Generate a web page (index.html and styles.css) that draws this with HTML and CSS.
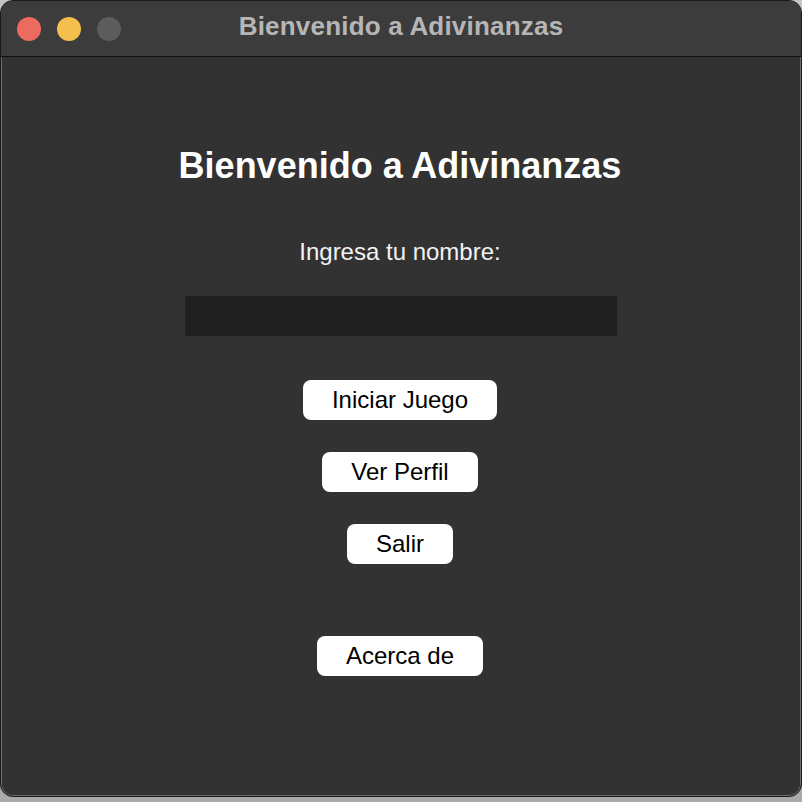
FILE: index.html
```html
<!DOCTYPE html>
<html lang="es">
<head>
<meta charset="utf-8">
<title>Bienvenido a Adivinanzas</title>
<link rel="stylesheet" href="styles.css">
</head>
<body>
<div class="window">
  <div class="titlebar">
    <div class="lights">
      <span class="light red"></span>
      <span class="light yellow"></span>
      <span class="light gray"></span>
    </div>
    <div class="wintitle">Bienvenido a Adivinanzas</div>
    <div class="spacer"></div>
  </div>
  <div class="content">
    <h1 class="heading">Bienvenido a Adivinanzas</h1>
    <label class="label" for="nombre">Ingresa tu nombre:</label>
    <input class="field" id="nombre" type="text">
    <button class="btn btn-first">Iniciar Juego</button>
    <button class="btn">Ver Perfil</button>
    <button class="btn">Salir</button>
    <button class="btn btn-far">Acerca de</button>
  </div>
</div>
</body>
</html>
```
FILE: styles.css
```css
html, body {
  margin: 0;
  padding: 0;
}
body {
  width: 802px;
  height: 802px;
  background: linear-gradient(#c4c4c4, #a9a9a9);
  font-family: "Liberation Sans", Arial, sans-serif;
  overflow: hidden;
}
.window {
  box-sizing: border-box;
  width: 802px;
  height: 797px;
  border: 1px solid #1a1a1a;
  border-radius: 13px;
  box-shadow: inset 0 0 0 1px #6c6c6c;
  background: #323232;
  overflow: hidden;
  display: flex;
  flex-direction: column;
}
.titlebar {
  flex: 0 0 auto;
  height: 55px;
  background: #3c3c3c;
  border-bottom: 1px solid #111;
  display: grid;
  grid-template-columns: 1fr auto 1fr;
  align-items: center;
  border-top-left-radius: 12px;
  border-top-right-radius: 12px;
}
.lights {
  display: flex;
  gap: 16px;
  padding-left: 16px;
}
.light {
  width: 24px;
  height: 24px;
  border-radius: 50%;
  display: block;
}
.red { background: #ed6a5e; }
.yellow { background: #f5bf4f; }
.gray { background: #5d5d5d; }
.wintitle {
  font-weight: bold;
  font-size: 26px;
  line-height: 30px;
  letter-spacing: 0.2px;
  color: #b6b6b6;
  padding-bottom: 6px;
  white-space: nowrap;
}
.content {
  flex: 1 1 auto;
  display: flex;
  flex-direction: column;
  align-items: center;
  padding-top: 89px;
  padding-right: 2px;
}
.heading {
  margin: 0;
  font-size: 36px;
  line-height: 40px;
  font-weight: bold;
  color: #ffffff;
}
.label {
  margin-top: 52px;
  font-size: 24px;
  line-height: 28px;
  color: #f2f2f2;
}
.field {
  margin-top: 30px;
  margin-left: 2px;
  box-sizing: border-box;
  width: 432px;
  height: 40px;
  background: #202020;
  border: none;
  outline: none;
  padding: 0 8px;
  color: #fff;
  font-family: inherit;
  font-size: 20px;
}
.btn {
  margin-top: 32px;
  height: 40px;
  padding: 0 29px;
  background: #ffffff;
  border: none;
  border-radius: 8px;
  color: #000;
  font-family: "Liberation Sans", Arial, sans-serif;
  font-size: 24px;
  line-height: 40px;
}
.btn-first { margin-top: 44px; }
.btn-far { margin-top: 72px; }
```
